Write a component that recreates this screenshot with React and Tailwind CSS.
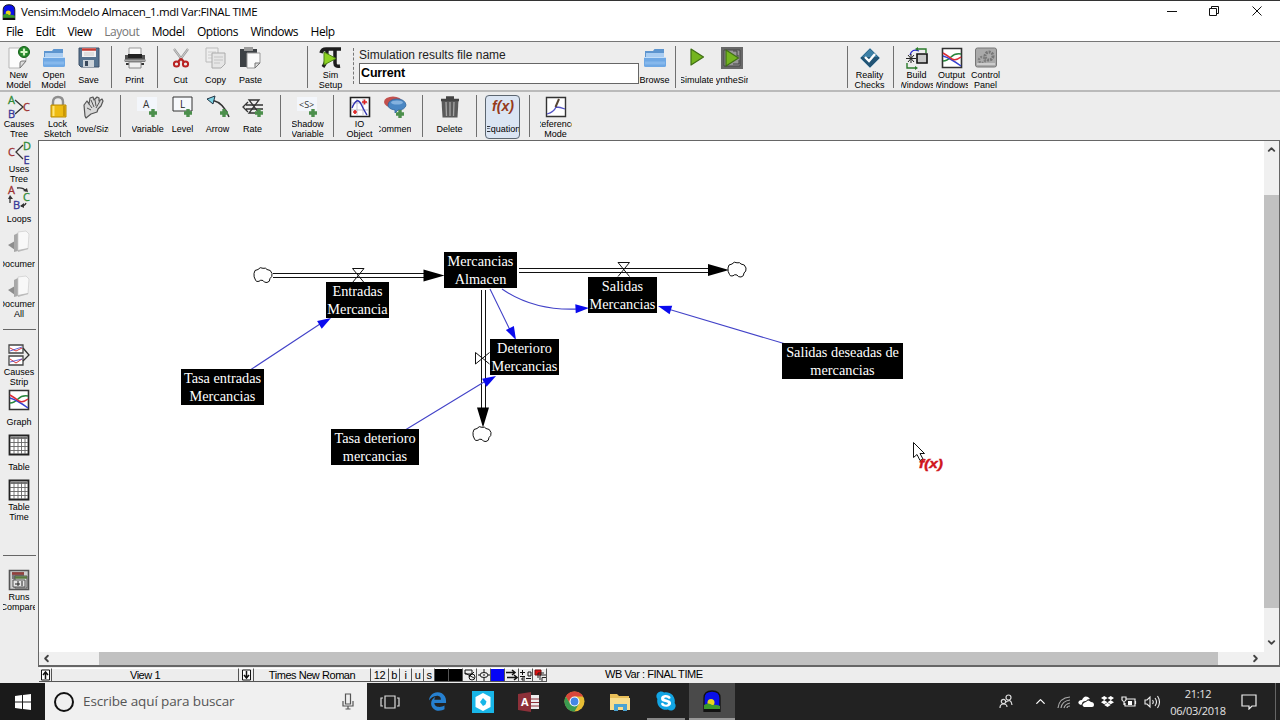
import React from 'react';
import { FaEdgeLegacy, FaDropbox, FaSkype } from 'react-icons/fa';
import { ChevronUp, ChevronDown, ChevronLeft, ChevronRight } from 'lucide-react';

// 22x22 drawing area shared by all the toolbar icons
const Svg = ({ children, size = 22 }) => (
    <svg width={size} height={size} viewBox="0 0 22 22" fill="none" className="shrink-0 overflow-visible">
        {children}
    </svg>
);

const Letter = ({ x, y, color, size = 11, children }) => (
    <text x={x} y={y} fill={color} stroke={color} strokeWidth=".3" fontSize={size} fontFamily="'Open Sans', sans-serif">
        {children}
    </text>
);

const Plus = ({ x = 15, y = 17 }) => (
    <path d={`M${x - 4} ${y}h8M${x} ${y - 4}v8`} stroke="#4c8f4c" strokeWidth="3.4" />
);

const Folder = () => (
    <Svg>
        <path d="M1 4h8l1.500-2H20v8H1z" fill="#5d95cf" />
        <path d="M2 6h18v6H2z" fill="#a9cdf2" />
        <path d="M0 10h22v8.500q0 1.500-1.500 1.500h-19Q0 20 0 18.500z" fill="#6fa8e4" />
        <path d="M0 10.500h22" stroke="#c4def8" />
        <path d="M1 16h20" stroke="#86b8ec" strokeWidth="3" />
    </Svg>
);

const NewModel = () => (
    <Svg>
        <path d="M1 1h17v13l-6 7H1z" fill="#fcfcfc" stroke="#b5b5b5" />
        <path d="M18 14l-6 7v-5q0-2 2-2z" fill="#ddd" stroke="#777" />
        <circle cx="16" cy="5" r="5.500" fill="#278a2c" stroke="#146018" />
        <path d="M12.500 5h7M16 1.500v7" stroke="#d8f5c8" strokeWidth="2.200" />
    </Svg>
);

const Save = () => (
    <Svg>
        <path d="M1 1h20v19H3l-2-2z" fill="#56738f" stroke="#3c5168" />
        <path d="M4 1h14v9H4z" fill="#f2f2f2" />
        <path d="M4 2.500h14" stroke="#c33a32" strokeWidth="2.500" />
        <path d="M6 6h10M6 8h10" stroke="#ccc" />
        <path d="M5 13h11v7H5z" fill="#ccd3d9" />
        <path d="M7 14h3v5H7z" fill="#39495c" />
    </Svg>
);

const Print = () => (
    <Svg>
        <path d="M5 1h12v7H5z" fill="#fafafa" stroke="#999" />
        <path d="M1 8h20v7H1z" fill="#515151" />
        <path d="M4 7h14v4H4z" fill="#222" />
        <path d="M0 13.500h22" stroke="#a6a6a6" strokeWidth="2" />
        <path d="M2 17h18" stroke="#333" strokeWidth="2" />
        <path d="M5 15h12v6H5z" fill="#f1f1f1" stroke="#888" />
    </Svg>
);

const Cut = () => (
    <Svg>
        <path d="M4 2l9 12M18 2L9 14" stroke="#999" strokeWidth="2.200" />
        <path d="M4 2l9 12M18 2L9 14" stroke="#ddd" strokeWidth=".8" />
        <path d="M11 11.500L8 15M11 11.500l3 3.500" stroke="#b92222" strokeWidth="2" />
        <circle cx="6.500" cy="17" r="2.600" stroke="#b92222" strokeWidth="2" />
        <circle cx="15.500" cy="17" r="2.600" stroke="#b92222" strokeWidth="2" />
    </Svg>
);

const Copy = () => (
    <Svg>
        <path d="M1 1h12v14H1z" fill="#eee" stroke="#bbb" />
        <path d="M3 5h8M3 8h8M3 11h8" stroke="#ccc" />
        <path d="M7 6h13v11l-4 4H7z" fill="#e6e6e6" stroke="#aaa" />
        <path d="M9 10h9M9 13h9M9 16h6" stroke="#c4c4c4" />
    </Svg>
);

const Paste = () => (
    <Svg>
        <path d="M0 2h17v18H0z" fill="#3d4145" />
        <path d="M4 0h9v4H4z" fill="#9a9a9a" />
        <path d="M7 6h13v10l-5 5H7z" fill="#fafafa" stroke="#999" />
        <path d="M20 16h-5v5z" fill="#ddd" stroke="#777" />
    </Svg>
);

const Play = ({ x = 4, y = 3 }) => (
    <path
        d={`M${x} ${y}l12.500 8-12.500 8z`}
        fill="#74b51f"
        stroke="#3f6f14"
        strokeWidth="1.200"
        strokeLinejoin="round"
    />
);

const Simulate = () => (
    <Svg>
        <Play x={5} y={2} />
    </Svg>
);

const SimSetup = () => (
    <Svg>
        <path d="M1 6Q2 2 6 2h15" stroke="#1d1d1d" strokeWidth="3.500" />
        <path d="M7 3Q7 15 3 20M15 3v13q0 4 5 3" stroke="#1d1d1d" strokeWidth="3.500" />
        <path d="M4 5l12 6.500L4 18z" fill="#8ed222" stroke="#4b8213" />
    </Svg>
);

const SyntheSim = () => (
    <Svg>
        <path d="M0 0h22v22H0z" fill="#686868" />
        <path d="M3 3h16v16H3z" fill="#989898" stroke="#474747" />
        <path d="M12 4h4v5h2M12 17h6v-4" stroke="#444" />
        <Play x={5} />
    </Svg>
);

const Reality = () => (
    <Svg>
        <path d="M11 1l10 10-10 10L1 11z" fill="#225475" stroke="#a6c1d2" />
        <path d="M11 2l8 8H3z" fill="#3c80a6" />
        <path d="M6 10l4 4 6-7" stroke="#fff" strokeWidth="2.400" />
    </Svg>
);

const Build = () => (
    <Svg>
        <path d="M4 8q2-7 9-4" stroke="#2222cc" strokeWidth="1.200" />
        <path d="M12 2h8v4M1 16v5h9" stroke="#2b7b2b" strokeWidth="1.400" />
        <path d="M12 0v4l-3-2zM9 19l3 2-3 2z" fill="#2b7b2b" />
        <path d="M0 11.500h10M2 8l6 7M8 8l-6 7M5 7v9" stroke="#222" />
        <path d="M11 7h10v9H11z" fill="#c8c8c8" stroke="#111" strokeWidth="1.600" />
    </Svg>
);

const Graph = () => (
    <Svg>
        <path d="M1.500 1.500h19v19h-19z" fill="#fff" stroke="#333" strokeWidth="1.600" />
        <path d="M2 14q4 0 8-4t10-3" stroke="#27853c" strokeWidth="1.500" />
        <path d="M2 9q7 2 18 10" stroke="#3540d0" strokeWidth="1.500" />
        <path d="M2 6q5 3 9 6 4 2 9-2" stroke="#dd2b35" strokeWidth="1.500" />
    </Svg>
);

const ControlPanel = () => (
    <Svg>
        <rect x=".5" y="1" width="21" height="19" rx="2" fill="#aaa" stroke="#777" />
        <circle cx="14" cy="9" r="4" stroke="#777" strokeWidth="3" strokeDasharray="2 1" />
        <circle cx="7" cy="13" r="3" stroke="#808080" strokeWidth="2.500" strokeDasharray="2 1" />
        <path d="M2 17h18" stroke="#ccc" strokeWidth="2" />
    </Svg>
);

const Lock = () => (
    <Svg>
        <path d="M6 12V6q0-5 5-5t5 5v6" stroke="#8f8f8f" strokeWidth="2.400" />
        <path d="M4 9h15v12H4z" fill="#eebb12" stroke="#b98a05" />
        <path d="M6.500 10v10" stroke="#ffe478" strokeWidth="2" />
        <path d="M17 10v10" stroke="#cb9706" strokeWidth="2" />
    </Svg>
);

const Hand = () => (
    <Svg>
        <path
            d="M3 20L2 9l3-4 2 3 1-6 3-1 1 3 3-3 2 1v3l3-2 1 2-2 5-3 3-1 3-6 2-5 4z"
            fill="#d8d8d8"
            stroke="#555"
            strokeWidth="1.200"
            strokeLinejoin="round"
        />
        <path d="M7 8l3 4M9 4l3 7M13 4l1 6M18 5l-4 7M5 12l4 2" stroke="#555" />
    </Svg>
);

const Variable = () => (
    <Svg>
        <path d="M0 1h20v14H0z" fill="#f3f6fb" />
        <text x="6" y="12" fontSize="10" fill="#333" fontFamily="'Open Sans', sans-serif">A</text>
        <Plus x={16} y={17} />
    </Svg>
);

const Level = () => (
    <Svg>
        <path d="M1 1h19v14H1z" fill="#f7f9fc" stroke="#333" />
        <text x="8" y="12" fontSize="10" fill="#222" fontFamily="'Open Sans', sans-serif">L</text>
        <Plus x={16} y={17} />
    </Svg>
);

const Arrow = () => (
    <Svg>
        <path d="M5 4q12 3 17 17" stroke="#333" strokeWidth="1.500" />
        <path d="M0 3l8-3-2 8z" fill="#7ed4e4" stroke="#234" />
        <Plus x={17} y={17} />
    </Svg>
);

const Rate = () => (
    <Svg>
        <path d="M4 9h17M4 13h17M6 6l-5 5 5 5" stroke="#333" strokeWidth="1.300" />
        <path d="M7 4h10L7 17h10z" stroke="#333" strokeWidth="1.300" />
        <Plus x={17} y={17} />
    </Svg>
);

const Shadow = () => (
    <Svg>
        <path d="M0 1h20v14H0z" fill="#f3f6fb" />
        <text x="2" y="12" fontSize="9" fill="#333" fontFamily="'Open Sans', sans-serif">&lt;S&gt;</text>
        <Plus x={16} y={17} />
    </Svg>
);

const IOObject = () => (
    <Svg>
        <path d="M1.500 1.500h19v19h-19z" fill="#fff" stroke="#222" strokeWidth="1.600" />
        <path d="M3 7h16M3 14h16M8 3v16M14 3v16" stroke="#aab" strokeWidth=".7" />
        <path d="M3 12q5-12 9-4t6 11" stroke="#3232b0" strokeWidth="1.400" />
        <path d="M13 6h5M15.500 3.500v5M4 16h4M6 14v4" stroke="#d22" strokeWidth="1.700" />
    </Svg>
);

const Comment = () => (
    <Svg>
        <ellipse cx="9" cy="6" rx="9" ry="5.500" fill="#c3504d" />
        <path d="M22 9q-1 5-8 5l-3 3v-3q-7-1-7-5 1-6 9-6t9 6z" fill="#4a87c4" stroke="#2d659c" strokeWidth=".8" />
        <ellipse cx="13" cy="6.500" rx="6" ry="2" fill="#84b2df" />
        <Plus x={16} y={18} />
    </Svg>
);

const Delete = () => (
    <Svg>
        <path d="M2.500 4h17l-1 17.500h-15z" fill="#5a5a5a" />
        <path d="M2 4h18M7 1.500h8" stroke="#444" strokeWidth="2.400" />
        <path d="M7 6l.5 14M11 6v14M15 6l-.5 14" stroke="#a5a5a5" strokeWidth="1.300" />
    </Svg>
);

const Equation = () => (
    <Svg>
        <text x="0" y="15" fontSize="14" fontWeight="bold" fontStyle="italic" fill="#963a1c" textLength="22" lengthAdjust="spacingAndGlyphs" fontFamily="'Liberation Sans', sans-serif">
            f(x)
        </text>
    </Svg>
);

const Reference = () => (
    <Svg>
        <path d="M1.500 1.500h19v19h-19z" fill="#fff" stroke="#333" strokeWidth="1.400" />
        <path d="M2 18q7-2 9-7 4 0 9 2" stroke="#5353c4" strokeWidth="1.300" />
        <path d="M10.500 11l3.500-8" stroke="#554433" strokeWidth="2" />
    </Svg>
);

const CausesTree = () => (
    <Svg>
        <Letter x={0} y={8} color="#2f8a35">A</Letter>
        <Letter x={0} y={22} color="#343496">B</Letter>
        <Letter x={15} y={15} color="#9c3030">C</Letter>
        <path d="M7 4l8 7-8 7" stroke="#333" strokeWidth="1.300" />
    </Svg>
);

const UsesTree = () => (
    <Svg>
        <Letter x={0} y={15} color="#9c3030">C</Letter>
        <Letter x={15} y={8.5} color="#2f8a35">D</Letter>
        <Letter x={15.5} y={22.5} color="#343496">E</Letter>
        <path d="M15 4l-7 7 7 7" stroke="#333" strokeWidth="1.300" />
    </Svg>
);

const Loops = () => (
    <Svg>
        <Letter x={0} y={8} color="#9c3030">A</Letter>
        <Letter x={15} y={15} color="#2f8a35">C</Letter>
        <Letter x={5} y={22.5} color="#343496">B</Letter>
        <path d="M9 2q6-1 9 3M18 17q-1 3-5 3M2 17v-6" stroke="#333" strokeWidth="1.300" />
        <path d="M20 6l-5-1 4-3zM12 20l4-3v5zM2 9l3 4H0z" fill="#333" />
    </Svg>
);

const Doc = () => (
    <Svg>
        <path d="M0 14l7-4v9z" fill="#8d8d8d" />
        <path d="M6 4l4-2v18l-4 1z" fill="#a8a8a8" />
        <path d="M10 1l8-1 3 3-1 15-10 2z" fill="#f8f8f8" stroke="#ccc" strokeWidth=".7" />
        <path d="M10 19l10-2v1l-10 3z" fill="#bbb" />
    </Svg>
);

const CausesStrip = () => (
    <Svg>
        <path d="M1 1h14v8H1zM1 12h14v9H1z" fill="#fff" stroke="#444" strokeWidth="1.300" />
        <path d="M2 4l6 3 6-3M2 15l6 4 6-4" stroke="#d33" />
        <path d="M2 7l12-4M2 18l12-3" stroke="#44c" strokeWidth=".8" />
        <path d="M15 4l6 7-6 6" stroke="#333" strokeWidth="1.300" />
    </Svg>
);

const Table = () => (
    <Svg>
        <path d="M1.500 1.500h19v19h-19z" fill="#fff" stroke="#222" strokeWidth="1.800" />
        <path d="M2 4h18" stroke="#777" strokeWidth="2" />
        <path d="M2 8.500h18M2 12.500h18M2 16.500h18M6 3v17M10 3v17M13.500 3v17M17 3v17" stroke="#666" strokeWidth=".9" />
    </Svg>
);

const Runs = () => (
    <Svg>
        <path d="M1.500 1.500h19v19h-19z" fill="#cfcfcf" stroke="#555" strokeWidth="1.600" />
        <path d="M4 3h12v7H4z" fill="#777" />
        <path d="M4 4.500h12" stroke="#95403c" strokeWidth="2.500" />
        <path d="M7 7h12v12H7z" fill="#ddd" stroke="#555" />
        <path d="M7 8.500h12" stroke="#597a3e" strokeWidth="2.500" />
        <path d="M5 11h12v7H5z" fill="#e5e5e5" stroke="#555" />
        <path d="M7 15h5M10 12v5M14 17v-5" stroke="#222" />
    </Svg>
);

const Vensim = ({ className }) => (
    <svg viewBox="0 0 18 22" className={className}>
        <path d="M1 22V8q0-7 8-7t8 7v14z" fill="#0a10e8" stroke="#111" strokeWidth="1.300" />
        <circle cx="8" cy="12.500" r="3.500" fill="#e9d61c" />
        <path d="M1 20V15q5-3 8 0 4-1 8 1v4z" fill="#3c9a2a" />
        <path d="M1 19h16v3H1z" fill="#111" />
    </svg>
);

// Labels wider than the button are cut on both sides
const Tool = ({ icon: Icon, label, active }) => (
    <div
        className={`flex w-[35px] shrink-0 flex-col items-center ${
            active ? 'rounded-sm bg-[#dbe5f3] outline outline-1 -outline-offset-1 outline-[#5c6670]' : ''
        }`}
    >
        <div className="flex h-[24px] items-center">
            <Icon />
        </div>
        <div className="flex h-[20px] flex-col justify-center">
            {label.map((line) => (
                <div key={line} className="flex h-[10px] w-[32px] justify-center overflow-hidden text-[9px] leading-[10px] whitespace-nowrap">
                    <span className="shrink-0">{line}</span>
                </div>
            ))}
        </div>
    </div>
);

const Sep = ({ width = 'w-[11px]', dotted }) => (
    <div className={`flex shrink-0 justify-center ${width}`}>
        <div className={`border-l ${dotted ? 'mt-[2px] h-[36px] border-dashed border-[#777]' : 'h-[42px] border-[#707070]'}`} />
    </div>
);

const menus = ['File', 'Edit', 'View', 'Layout', 'Model', 'Options', 'Windows', 'Help'];

const sidebarTop = [
    { icon: CausesTree, label: ['Causes', 'Tree'] },
    { icon: UsesTree, label: ['Uses', 'Tree'] },
    { icon: Loops, label: ['Loops'] },
    { icon: Doc, label: ['Document'] },
    { icon: Doc, label: ['Document', 'All'] },
];

const sidebarMiddle = [
    { icon: CausesStrip, label: ['Causes', 'Strip'] },
    { icon: Graph, label: ['Graph'] },
    { icon: Table, label: ['Table'] },
    { icon: Table, label: ['Table', 'Time'] },
];

// Positions on the sketch canvas
const nodes = [
    { pos: 'left-[287px] top-[141px] w-[63px]', lines: ['Entradas', 'Mercancia'] },
    { pos: 'left-[405px] top-[111px] w-[73px]', lines: ['Mercancias', 'Almacen'] },
    { pos: 'left-[549px] top-[136px] w-[69px]', lines: ['Salidas', 'Mercancias'] },
    { pos: 'left-[451px] top-[198px] w-[69px]', lines: ['Deterioro', 'Mercancias'] },
    { pos: 'left-[142px] top-[228px] w-[83px]', lines: ['Tasa entradas', 'Mercancias'] },
    { pos: 'left-[292px] top-[288px] w-[88px]', lines: ['Tasa deterioro', 'mercancias'] },
    { pos: 'left-[743px] top-[202px] w-[121px]', lines: ['Salidas deseadas de', 'mercancias'] },
];

const Cloud = ({ x, y }) => (
    <path
        d="M-9-1.500q0-4 4-4 2-3 5-1.200 3-.8 4 1.200 4 0 5 4 .5 3.500-2 5 0 3.500-3 4-3 .3-4-2-2.500-1-4 .8-3 1-3.500-1.300Q-9.500 2-9-1.500z"
        transform={`translate(${x} ${y})`}
        fill="#fff"
        stroke="#111"
    />
);

const BlueHead = ({ x, y, angle }) => (
    <path d="M0 0l-13.500-4.500v9z" fill="#0a0aee" transform={`translate(${x} ${y}) rotate(${angle})`} />
);

const Sketch = () => (
    <div className="relative min-w-0 flex-1 overflow-hidden bg-white">
        <svg className="absolute inset-0" width="1225" height="511" viewBox="39 141 1225 511" fill="none">
            <g stroke="#111" strokeWidth="1" shapeRendering="crispEdges">
                <path d="M273 273.500h152M273 277.500h152M519 268.500h190M519 272.500h190" />
                <path d="M481.500 290v118M485.500 290v118" />
            </g>
            <path d="M423.500 269.500v12l21-6zM708 264v12l21-6zM477 407.500h12l-6 20z" fill="#000" />
            <path
                d="M352.500 268.500h11.500l-11.500 14M364 282.500l-11.500-14M618 262.500h11.500l-11.500 14M629.500 276.500l-11.500-14M475.500 352.500v11.500l14-11.500M475.500 352.500l14 11.500"
                stroke="#111"
            />
            <Cloud x={263} y={275} />
            <Cloud x={737} y={269.5} />
            <Cloud x={482} y={434} />
            <g stroke="#4343c8" strokeWidth="1.100">
                <path d="M251 369.500L320 324M406 429.500L484 382M784 343.500L668 309M490 289l20 41M502 289q32 22 76 20" />
            </g>
            <BlueHead x={331} y={318} angle={-31} />
            <BlueHead x={496} y={376} angle={-30} />
            <BlueHead x={658} y={306} angle={197} />
            <BlueHead x={516} y={340} angle={63} />
            <BlueHead x={589} y={308} angle={-3} />
        </svg>
        {nodes.map((node) => (
            <div
                key={node.lines.join(' ')}
                className={`absolute flex h-[36px] flex-col items-center bg-black pt-px font-['Liberation_Serif',serif] text-[14.300px] leading-[17.500px] whitespace-nowrap text-white ${node.pos}`}
            >
                {node.lines.map((line) => (
                    <span key={line}>{line}</span>
                ))}
            </div>
        ))}
        <svg className="absolute left-[873px] top-[300px]" width="34" height="32" viewBox="0 0 34 32">
            <path d="M1.500 1.500v15l3.500-3 3 6 3-1.500-3-5.500h4.500z" fill="#fff" stroke="#111" />
            <text x="7" y="27" fontSize="13" fontWeight="bold" fontStyle="italic" fill="#d0141c" stroke="#d0141c" strokeWidth=".4" textLength="24" lengthAdjust="spacingAndGlyphs" fontFamily="'Liberation Sans', sans-serif">
                f(x)
            </text>
        </svg>
    </div>
);

const Cell = ({ className, children }) => (
    <div className={`flex h-[14px] shrink-0 items-center justify-center border-r border-b border-[#555] border-t border-t-white ${className}`}>
        {children}
    </div>
);

const PageArrow = ({ down }) => (
    <svg width="11" height="12" viewBox="0 0 11 12" fill="none" className={down ? 'rotate-180' : ''}>
        <path d="M1.500 1h8v10h-8z" fill="#fff" stroke="#111" />
        <path d="M5.500 10V4M3 6l2.500-3L8 6" stroke="#111" strokeWidth="1.500" />
    </svg>
);

const StatusBar = () => (
    <div className="flex h-[16px] shrink-0 items-start bg-[#ededed] pl-px pt-px text-[11px] leading-[13px] tracking-[-0.45px]">
        <Cell className="w-[13px]"><PageArrow /></Cell>
        <Cell className="w-[187px]">View 1</Cell>
        <Cell className="w-[15px]"><PageArrow down /></Cell>
        <Cell className="w-[117px]">Times New Roman</Cell>
        <Cell className="w-[18px]">12</Cell>
        <Cell className="w-[11px]">b</Cell>
        <Cell className="w-[12px]">i</Cell>
        <Cell className="w-[12px]">u</Cell>
        <Cell className="w-[11px]">s</Cell>
        <Cell className="w-[14px] bg-black" />
        <Cell className="w-[14px] bg-black" />
        <Cell className="w-[14px]">
            <svg width="12" height="12" viewBox="0 0 12 12" fill="none" stroke="#111">
                <path d="M1 1h7v4H1zM1 4l9 5M10 3L5 8" />
                <circle cx="8" cy="8" r="3" />
            </svg>
        </Cell>
        <Cell className="w-[14px]">
            <svg width="12" height="12" viewBox="0 0 12 12" fill="none" stroke="#111">
                <ellipse cx="6" cy="6" rx="4" ry="2.500" />
                <path d="M6 0v3M6 9v3M0 6h2M10 6h2M5 6h2" />
            </svg>
        </Cell>
        <Cell className="w-[14px] bg-[#0505f5]" />
        <Cell className="w-[14px]">
            <svg width="12" height="12" viewBox="0 0 12 12" fill="none" stroke="#111" strokeWidth="1.500">
                <path d="M0 3.500h9M1 8.500h9M6 1l3 2.500L6 6M8 6l3 2.500L8 11" />
            </svg>
        </Cell>
        <Cell className="w-[14px]">
            <svg width="12" height="12" viewBox="0 0 12 12" fill="none" stroke="#111">
                <path d="M0 3.500h5M2.500 1v5M0 7.500h5M5 9H2v2h3M8 3h3v4H8zM6 9.500h5" />
            </svg>
        </Cell>
        <Cell className="w-[14px]">
            <svg width="12" height="12" viewBox="0 0 12 12" fill="none" stroke="#222">
                <path d="M1 1h6v5H1z" fill="#d11" stroke="#711" />
                <path d="M4 9V4h6M6 11V6h6M8 12V8.500h4" />
            </svg>
        </Cell>
        <div className="pl-[58px]">WB Var : FINAL TIME</div>
    </div>
);

const TaskButton = ({ className = '', children }) => (
    <div className={`flex h-full w-[45.700px] shrink-0 items-center justify-center ${className}`}>{children}</div>
);

const Taskbar = () => (
    <div className="flex h-[37px] shrink-0 items-stretch bg-[#222222] font-['Open_Sans',sans-serif] text-white">
        <div className="flex w-[45px] items-center justify-center bg-[#1a1a1a]">
            <svg width="16" height="16" viewBox="0 0 16 16" fill="#fff">
                <path d="M0 2l7-1v6.500H0zM8 .9L16 0v7.500H8zM0 8.500h7V15l-7-1zM8 8.500h8V16l-8-1z" />
            </svg>
        </div>
        <div className="flex w-[322px] items-center bg-[#f0f0f0] pr-[13px] pl-[9px]">
            <div className="size-[20px] rounded-full border-[2.500px] border-[#111]" />
            <span className="ml-[9px] text-[13.500px] tracking-[-0.120px] text-[#555]">Escribe aquí para buscar</span>
            <svg width="12" height="17" viewBox="0 0 12 17" fill="none" stroke="#555" strokeWidth="1.200" className="ml-auto">
                <path d="M3.500 1h5v10h-5zM1 8v5h10V8M6 13v3M3.500 16h5" />
            </svg>
        </div>
        <TaskButton>
            <svg width="20" height="16" viewBox="0 0 20 16" fill="none" stroke="#ddd" strokeWidth="1.200">
                <path d="M5 2h10v12H5zM3 4H1v8h2M17 4h2v8h-2" />
            </svg>
        </TaskButton>
        <TaskButton className="ml-[2px]"><FaEdgeLegacy className="size-[19px] text-[#2680d0]" /></TaskButton>
        <TaskButton>
            <svg width="22" height="22" viewBox="0 0 22 22">
                <path d="M0 0h22v22H0z" fill="#18b6e8" />
                <path d="M11 2l7.500 4v10L11 20l-7.500-4V6z" fill="#fff" />
                <path d="M11 7l3.500 3.500-1 3-2.500 1.500-3-4z" fill="#18b6e8" />
            </svg>
        </TaskButton>
        <TaskButton>
            <svg width="22" height="20" viewBox="0 0 22 20">
                <path d="M12 3h9v14h-9z" fill="#eee" />
                <path d="M12 7h9M12 10.500h9M12 14h9" stroke="#8d3039" />
                <path d="M0 2l13-2v20L0 18z" fill="#8d3039" />
                <text x="3" y="14" fontSize="11" fontWeight="bold" fill="#fff" fontFamily="'Open Sans', sans-serif">A</text>
            </svg>
        </TaskButton>
        <TaskButton>
            <svg width="21" height="21" viewBox="-10.500 -10.500 21 21">
                <circle r="10" fill="#e7bd34" />
                <path d="M-8.700-5A10 10 0 0 1 8.700-5H0L-4.300 2.500z" fill="#d8473b" />
                <path d="M-8.700-5A10 10 0 0 0 0 10L4.300 2.500h-8.600z" fill="#3b9a50" />
                <circle r="5" fill="#fff" />
                <circle r="3.900" fill="#4486e4" />
            </svg>
        </TaskButton>
        <TaskButton>
            <svg width="20" height="18" viewBox="0 0 20 18">
                <path d="M0 1h7l2 2h10v14H0z" fill="#e9bf58" />
                <path d="M0 5h20v12H0z" fill="#f8dd8c" />
                <path d="M4 18v-7h13v7h-4v-4H8v4z" fill="#4aa3d2" />
            </svg>
        </TaskButton>
        <TaskButton>
            <div className="flex h-full w-[38px] items-center justify-center border-b-2 border-[#888]">
                <span className="flex size-[16px] items-center justify-center rounded-full bg-white">
                    <FaSkype className="size-[22px] shrink-0 text-[#12a5e4]" />
                </span>
            </div>
        </TaskButton>
        <TaskButton className="border-b-2 border-[#999] bg-[#4a4a4a]"><Vensim className="h-[22px] w-[18px]" /></TaskButton>
        <div className="ml-auto flex items-center">
            <svg width="14" height="15" viewBox="0 0 14 15" fill="none" stroke="#ddd" strokeWidth="1.200" className="mr-[20px]">
                <circle cx="9.500" cy="3.500" r="2.500" />
                <circle cx="4.500" cy="7.500" r="2.200" />
                <path d="M1 14q0-4 3.500-4t3.500 3M7 8q5-4 6 3" />
            </svg>
            <ChevronUp className="mr-[9px] size-[15px]" strokeWidth={2} />
            <svg width="14" height="14" viewBox="0 0 14 14" fill="none" stroke="#aaa" strokeWidth="1.200" className="mr-[7px]">
                <path d="M1 13Q2 3 13 2M4 13q1-7 9-8M7 13q1-4 6-5M10 13q0-2 3-2" />
            </svg>
            <svg width="16" height="11" viewBox="0 0 16 11" fill="#fff" className="mr-[7px]">
                <path d="M3 9Q-1 8 1 5q1-1 3-1 2-5 6-3l2 2Q9 3 8 5 4 5 4 8zM6 11q-3-2 0-4 1-1 2-1 2-3 5 0 3 0 3 3 0 2-2 2z" />
            </svg>
            <FaDropbox className="mr-[7px] size-[13px]" />
            <svg width="16" height="12" viewBox="0 0 16 12" fill="none" stroke="#eee" strokeWidth="1.200" className="mr-[7px]">
                <path d="M5 3h9v7H4V7M14.500 5v3M1 1v3q2 3 4 0V1zM3 5v4" />
                <path d="M7 5h4v4H7z" fill="#fff" stroke="none" />
            </svg>
            <svg width="17" height="14" viewBox="0 0 17 14" fill="none" stroke="#eee" strokeWidth="1.100" className="mr-[8px]">
                <path d="M1 5h2l3-3v10L3 9H1zM8.500 5q1.500 2 0 4M11 3q3 4 0 8M13.500 1q4 6 0 12" />
            </svg>
            <div className="w-[58px] text-center text-[11px] leading-[17px] tracking-[-0.300px] text-[#e4e4e4]">
                <div>21:12</div>
                <div>06/03/2018</div>
            </div>
            <svg width="16" height="16" viewBox="0 0 16 16" fill="none" stroke="#eee" strokeWidth="1.200" className="mr-[18px] ml-[14px]">
                <path d="M1 1h14v11h-4l-3 3v-3H1z" />
            </svg>
            <div className="mr-[4px] h-[37px] border-l border-[#666]" />
        </div>
    </div>
);

const App = () => {
    return (
        <div className="flex h-[720px] w-[1280px] flex-col overflow-hidden bg-[#ededed] font-['Liberation_Sans',Arial,sans-serif] text-black">
            {/* Title bar */}
            <div className="flex h-[22px] shrink-0 items-center border-t border-[#333] bg-white pl-[2px] font-['Open_Sans',sans-serif]">
                <Vensim className="h-[16px] w-[14px]" />
                <span className="ml-[5px] text-[11.500px] tracking-[-0.370px] whitespace-nowrap">Vensim:Modelo Almacen_1.mdl Var:FINAL TIME</span>
                <div className="ml-auto flex items-center pr-[18px] pb-[2px]">
                    <svg width="96" height="12" viewBox="0 0 96 12" fill="none" stroke="#111">
                        <path d="M1 6.500h10M43.500 3.500h7v7h-7zM45.500 3.500v-2h7v7h-2M86.500 1.500l9 9M95.500 1.500l-9 9" />
                    </svg>
                </div>
            </div>

            {/* Menu */}
            <div className="flex h-[20px] shrink-0 items-center gap-[12.500px] border-b border-[#777] bg-white pl-[6px] font-['Open_Sans',sans-serif] text-[12px] tracking-[-0.480px]">
                {menus.map((menu) => (
                    <span key={menu} className={menu === 'Layout' ? 'text-[#777]' : ''}>{menu}</span>
                ))}
            </div>

            {/* Main toolbar */}
            <div className="flex h-[50px] shrink-0 items-start border-b-2 border-[#bababa] pt-[4px] pl-px">
                <Tool icon={NewModel} label={['New', 'Model']} />
                <Tool icon={Folder} label={['Open', 'Model']} />
                <Tool icon={Save} label={['Save']} />
                <Sep />
                <Tool icon={Print} label={['Print']} />
                <Sep />
                <Tool icon={Cut} label={['Cut']} />
                <Tool icon={Copy} label={['Copy']} />
                <Tool icon={Paste} label={['Paste']} />
                <Sep width="ml-[34px] w-[11px]" />
                <Tool icon={SimSetup} label={['Sim', 'Setup']} />
                <Sep dotted />
                <div className="w-[280px]">
                    <div className="h-[17px] text-[12px] leading-[18px] text-[#222]">Simulation results file name</div>
                    <div className="h-[21px] border border-[#666] bg-white pl-px text-[12.500px] leading-[19px] font-bold tracking-[-0.150px]">Current</div>
                </div>
                <div className="-ml-[2px]"><Tool icon={Folder} label={['Browse']} /></div>
                <Sep width="w-[6px]" />
                <div className="pl-px"><Tool icon={Simulate} label={['Simulate']} /></div>
                <Tool icon={SyntheSim} label={['SyntheSim']} />
                <Sep width="ml-[93px] w-[11px]" />
                <div className="-ml-px"><Tool icon={Reality} label={['Reality', 'Checks']} /></div>
                <Sep width="w-[12px]" />
                <Tool icon={Build} label={['Build', 'Windows']} />
                <Tool icon={Graph} label={['Output', 'Windows']} />
                <div className="-ml-px"><Tool icon={ControlPanel} label={['Control', 'Panel']} /></div>
            </div>

            <div className="flex min-h-0 flex-1">
                {/* Analysis tools */}
                <div className="flex w-[38px] shrink-0 flex-col items-center gap-px pt-[3px]">
                    {sidebarTop.map((tool, index) => <Tool key={index} {...tool} />)}
                    <div className="mt-[9px] mb-[12px] w-[33px] shrink-0 border-t border-[#666]" />
                    {sidebarMiddle.map((tool, index) => <Tool key={index} {...tool} />)}
                    <div className="mt-[32px] mb-[11px] w-[33px] shrink-0 border-t border-[#666]" />
                    <Tool icon={Runs} label={['Runs', 'Compare']} />
                </div>

                <div className="flex min-w-0 flex-1 flex-col">
                    {/* Sketch tools */}
                    <div className="flex h-[48px] shrink-0 items-start pt-[3px] pl-[2px]">
                        <Tool icon={Lock} label={['Lock', 'Sketch']} />
                        <Tool icon={Hand} label={['Move/Size']} />
                        <Sep width="w-[20px]" />
                        <Tool icon={Variable} label={['Variable']} />
                        <Tool icon={Level} label={['Level']} />
                        <Tool icon={Arrow} label={['Arrow']} />
                        <Tool icon={Rate} label={['Rate']} />
                        <Sep width="w-[20px]" />
                        <Tool icon={Shadow} label={['Shadow', 'Variable']} />
                        <Sep width="w-[17px]" />
                        <Tool icon={IOObject} label={['IO', 'Object']} />
                        <Tool icon={Comment} label={['Comment']} />
                        <Sep width="w-[20px]" />
                        <Tool icon={Delete} label={['Delete']} />
                        <Sep width="w-[18px]" />
                        <Tool icon={Equation} label={['Equation']} active />
                        <Sep width="w-[18px]" />
                        <Tool icon={Reference} label={['Reference', 'Mode']} />
                    </div>

                    <div className="flex min-h-0 flex-1 flex-col border border-b-2 border-[#666]">
                        <div className="flex min-h-0 flex-1">
                            <Sketch />
                            <div className="flex w-[15px] flex-col items-center bg-[#f0f0f0]">
                                <ChevronUp className="mt-[3px] size-[11px] shrink-0 text-[#444]" strokeWidth={4} />
                                <div className="mt-[40px] w-full flex-1 bg-[#c1c1c1]" />
                                <ChevronDown className="mt-[29px] mb-[4px] size-[11px] shrink-0 text-[#444]" strokeWidth={4} />
                            </div>
                        </div>
                        <div className="flex h-[13px] shrink-0 items-center bg-[#f0f0f0]">
                            <ChevronLeft className="ml-[2px] size-[11px] text-[#444]" strokeWidth={4} />
                            <div className="ml-[47px] h-full w-[1119px] bg-[#c1c1c1]" />
                            <ChevronRight className="ml-[32px] size-[11px] text-[#444]" strokeWidth={4} />
                        </div>
                    </div>

                    <StatusBar />
                </div>
            </div>

            <Taskbar />
        </div>
    );
};

export default App;
